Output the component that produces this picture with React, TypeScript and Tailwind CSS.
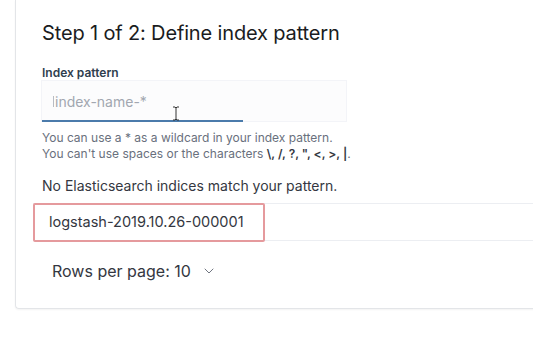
import React from 'react';
import { ChevronDown } from 'lucide-react';

const App: React.FC = () => {
  return (
    <div className="relative w-[533px] h-[356px] overflow-hidden bg-white font-['Inter',sans-serif]">
      <div className="ml-[15px] w-[560px] h-[309px] border-l border-b border-[#e3e5e8] rounded-bl-[4px] shadow-[0_1px_2px_rgba(0,0,0,0.05)]">
        <div className="pl-[26px] pt-[19px]">
          <h2 className="text-[20px] leading-[28px] text-[#1a1c21] tracking-[-0.15px]">
            Step 1 of 2: Define index pattern
          </h2>

          <label className="block mt-[18px] text-[12px] leading-[16px] font-semibold text-[#2f3e4e]">
            Index pattern
          </label>

          <div className="relative w-[304px] h-[40px] bg-[#fcfcfd] shadow-[0_0_0_1px_rgba(15,39,118,0.05)]">
            <div className="flex items-center h-full pl-[11px]">
              <span className="w-px h-[11px] bg-[#b8bcc3] mr-[1px]" />
              <span className="text-[14px] text-[#a2a7b0]">index-name-*</span>
            </div>
            <div className="absolute left-0 bottom-[-1px] w-[201px] h-[2px] bg-[#4b7bab]" />
            <svg className="absolute left-[130px] top-[25px]" width="8" height="15" viewBox="0 0 8 15">
              <path d="M1 1h2l1 1 1-1h2M4 2v11M1 14h2l1-1 1 1h2" fill="none" stroke="#333" strokeWidth="1" />
            </svg>
          </div>

          <div className="mt-[9px] text-[12px] leading-[16px] text-[#69707d]">
            <p>You can use a * as a wildcard in your index pattern.</p>
            <p>
              You can't use spaces or the characters <span className="text-[#343741] font-semibold">\, /, ?, ", &lt;, &gt;, |</span>.
            </p>
          </div>

          <p className="mt-[14px] text-[14px] leading-[20px] text-[#343741]">
            No Elasticsearch indices match your pattern.
          </p>
        </div>

        <div className="relative mt-[7px] ml-[17px]">
          <div className="h-[38px] flex items-center pl-[16px] border-t border-b border-[#eceef2] text-[14.5px] text-[#343741]">
            logstash-2019.10.26-000001
          </div>
          <div className="absolute left-0 top-0 w-[232px] h-[39px] border-2 border-[#e59a9d] rounded-[2px]" />
        </div>

        <div className="mt-[19px] ml-[36px] flex items-center text-[16px] leading-[22px] text-[#343741]">
          <span>Rows per page: 10</span>
          <ChevronDown className="ml-[10px] w-[16px] h-[16px] text-[#535966]" strokeWidth={1.25} />
        </div>
      </div>
    </div>
  );
};

export default App;
